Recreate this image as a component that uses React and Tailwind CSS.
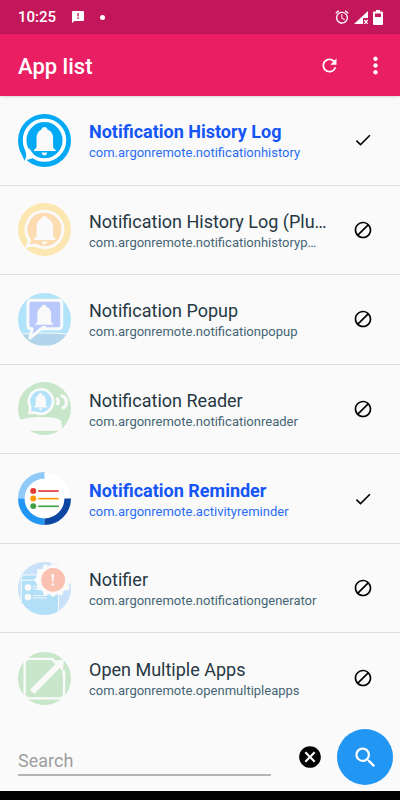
import { useState } from "react";
import {
  MdAlarm,
  MdBlock,
  MdCancel,
  MdCheck,
  MdMoreVert,
  MdRefresh,
  MdSearch,
} from "react-icons/md";

function IconFrame({ children }) {
  return (
    <svg viewBox="0 0 160 160" className="size-[53px] shrink-0" aria-hidden="true">
      {children}
    </svg>
  );
}

function Bell({ transform }) {
  return (
    <g fill="#fafafa" transform={transform}>
      <path d="M80 39c5 0 8 3 9 8 11 4 17 13 17 25v25c0 5 2 8 8 12v3H48v-3c5-4 8-7 8-12V72c0-12 6-21 15-25 1-5 4-8 9-8z" />
      <path d="M71 116h17c-1 6-4 9-8 9s-8-3-9-9z" />
    </g>
  );
}

function HistoryIcon({ outer, inner }) {
  return (
    <IconFrame>
      <circle cx="80" cy="80" r="80" fill={outer} />
      <path
        d="M80 25a55 55 0 1 1-28 102l-24 3 7-17A55 55 0 0 1 80 25z"
        fill={inner}
        stroke="#fafafa"
        strokeWidth="9"
      />
      <Bell />
    </IconFrame>
  );
}

function HistoryLogIcon() {
  return (
    <IconFrame>
      <circle cx="80" cy="80" r="80" fill="#03a9f4" />
      <circle cx="80" cy="79" r="60" fill="none" stroke="#fff" strokeWidth="11" />
      <path d="M22 108l12-4 18 24-10 6-22 6 5-13z" fill="#fff" />
      <path d="M4 106l16 9 5 11-5 16z" fill="#03a9f4" />
      <Bell />
    </IconFrame>
  );
}

function PopupIcon() {
  return (
    <IconFrame>
      <clipPath id="popup-clip">
        <circle cx="80" cy="80" r="80" />
      </clipPath>
      <g clipPath="url(#popup-clip)">
        <path fill="#b1e4fb" d="M0 0h160v160H0z" />
        <path
          d="M0 126c50-7 110-7 160 0v34H0z"
          fill="#b3d5eb"
          stroke="#fafafa"
          strokeWidth="3"
        />
      </g>
      <path
        d="M40 22h82c6 0 10 4 10 10v66c0 6-4 10-10 10H70l-34 28 7-28h-3c-6 0-10-4-10-10V32c0-6 4-10 10-10z"
        fill="#b9c9fc"
        stroke="#fafafa"
        strokeWidth="9"
        strokeLinejoin="round"
      />
      <Bell transform="translate(12 3) scale(.83)" />
    </IconFrame>
  );
}

function ReaderIcon() {
  return (
    <IconFrame>
      <circle cx="80" cy="80" r="80" fill="#c8e6c9" />
      <path
        d="M69 22a37 37 0 1 1-17 70l-17 1 2-17A37 37 0 0 1 69 22z"
        fill="#b3e3fb"
        stroke="#fafafa"
        strokeWidth="8"
      />
      <Bell transform="translate(20 10) scale(.6)" />
      <g fill="none" stroke="#fafafa" strokeWidth="10">
        <path d="M116 48c8 7 8 14 0 21" />
        <path d="M129 40c20 6 24 31 4 40" />
      </g>
      <path
        d="M4 116c20-13 98-13 118-4 8 4 10 9 10 18v17H8z"
        fill="#fafafa"
      />
    </IconFrame>
  );
}

function ReminderIcon() {
  return (
    <IconFrame>
      <circle cx="80" cy="80" r="78" fill="#fff" />
      <g fill="none" strokeWidth="20">
        <path d="M10 80A70 70 0 0 1 80 10" stroke="#90caf9" />
        <path d="M80 150A70 70 0 0 1 10 80" stroke="#2196f3" />
        <path d="M150 80A70 70 0 0 1 80 150" stroke="#0d47a1" />
      </g>
      <g fill="#e53935">
        <circle cx="46" cy="57" r="9" />
        <path d="M61 55h62v5H61z" />
      </g>
      <g fill="#ff9800">
        <circle cx="46" cy="80" r="9" />
        <path d="M61 78h62v5H61z" />
      </g>
      <g fill="#43a047">
        <circle cx="46" cy="103" r="9" />
        <path d="M61 101h62v5H61z" />
      </g>
    </IconFrame>
  );
}

function NotifierIcon() {
  return (
    <IconFrame>
      <clipPath id="notifier-clip">
        <circle cx="80" cy="80" r="80" />
      </clipPath>
      <g clipPath="url(#notifier-clip)">
        <path fill="#c9e2f9" d="M0 0h160v160H0z" />
        <path
          d="M10 170V54c0-10 5-15 15-15h82c10 0 15 5 15 15v116"
          fill="#b0dff7"
          stroke="#fafafa"
          strokeWidth="3"
        />
        <path d="M12 55h60" stroke="#fafafa" strokeWidth="3" />
        <g fill="#fafafa">
          <circle cx="30" cy="77" r="10" />
          <circle cx="30" cy="106" r="10" />
          <path d="M45 72h28v3H45zM45 79h30v3H45zM45 100h43v3H45zM45 107h43v3H45z" />
        </g>
      </g>
      <path
        d="M106 3l12 9 15-6 6 15 16 2-1 16 11 15-11 14 1 16-16 2-6 15-15-4-12 9-12-9-15 4-6-15-16-2 1-16-9-14 9-15-1-16 16-2 6-15 15 6z"
        fill="#fafafa"
      />
      <circle cx="106" cy="54" r="36" fill="#fac0b0" />
      <path d="M101 36h8l-2 24h-4z" fill="#fafafa" />
      <circle cx="105" cy="68" r="4" fill="#fafafa" />
    </IconFrame>
  );
}

function OpenMultipleIcon() {
  return (
    <IconFrame>
      <circle cx="80" cy="80" r="80" fill="#c8e6c9" />
      <path
        d="M107 21H33c-9 0-13 4-13 13v93c0 9 4 13 13 13h93c9 0 13-4 13-13V56"
        fill="none"
        stroke="#fafafa"
        strokeWidth="7"
      />
      <path
        d="M36 114l77-77-10-10 35-4-2 35-10-10-77 79z"
        fill="#fafafa"
      />
      <path d="M100 17l16 9-14 2zM144 64l-9-10-1 16z" fill="#fafafa" />
    </IconFrame>
  );
}

const apps = [
  {
    name: "Notification History Log",
    id: "com.argonremote.notificationhistory",
    icon: <HistoryLogIcon />,
    enabled: true,
  },
  {
    name: "Notification History Log (Plu…",
    id: "com.argonremote.notificationhistoryp…",
    icon: <HistoryIcon outer="#fde7b1" inner="#fcdcb0" />,
    enabled: false,
  },
  {
    name: "Notification Popup",
    id: "com.argonremote.notificationpopup",
    icon: <PopupIcon />,
    enabled: false,
  },
  {
    name: "Notification Reader",
    id: "com.argonremote.notificationreader",
    icon: <ReaderIcon />,
    enabled: false,
  },
  {
    name: "Notification Reminder",
    id: "com.argonremote.activityreminder",
    icon: <ReminderIcon />,
    enabled: true,
  },
  {
    name: "Notifier",
    id: "com.argonremote.notificationgenerator",
    icon: <NotifierIcon />,
    enabled: false,
  },
  {
    name: "Open Multiple Apps",
    id: "com.argonremote.openmultipleapps",
    icon: <OpenMultipleIcon />,
    enabled: false,
  },
];

function StatusBar() {
  return (
    <div className="flex h-[34px] items-center bg-[#c2185b] pr-[17px] pl-[18px] text-white">
      <span className="text-[15px] font-medium">10:25</span>
      <svg viewBox="0 0 12 12" className="ml-4 size-3" fill="currentColor">
        <path
          fillRule="evenodd"
          d="M1 0h10a1 1 0 0 1 1 1v8a1 1 0 0 1-1 1H2.500L0 12V1a1 1 0 0 1 1-1zM5.400 2v3.500h1.400V2zM5.400 6.500v1.400h1.400V6.500z"
        />
      </svg>
      <span className="ml-4 size-[5px] rounded-full bg-white" />
      <div className="ml-auto flex items-center gap-1">
        <MdAlarm className="size-4" />
        <svg viewBox="0 0 15 15" className="size-[15px]" fill="currentColor">
          <path d="M14 1v7H9v6H0z" />
          <path
            d="M10.300 10l3.400 3.800M13.700 10l-3.400 3.800"
            stroke="currentColor"
            strokeWidth="1.200"
          />
        </svg>
        <svg viewBox="0 0 10 15" className="h-[15px] w-[10px]" fill="currentColor">
          <path
            fillRule="evenodd"
            d="M3 0h4v1.500h2a1 1 0 0 1 1 1V14a1 1 0 0 1-1 1H1a1 1 0 0 1-1-1V2.500a1 1 0 0 1 1-1h2zM2 3.500V7h6V3.500z"
          />
        </svg>
      </div>
    </div>
  );
}

function AppRow({ app, onToggle }) {
  return (
    <li className="flex items-center border-b border-[#e0e0e0] pr-[27px] pl-[18px] last:border-b-0">
      {app.icon}
      <div className="ml-[18px] min-w-0 flex-1 pt-0.5">
        <h2
          className={
            app.enabled
              ? "truncate text-lg leading-6 font-bold text-[#1455f5]"
              : "truncate text-lg leading-6 text-[#263743]"
          }
        >
          {app.name}
        </h2>
        <p
          className={
            app.enabled
              ? "truncate text-[13px] leading-[18px] text-[#2a6df5]"
              : "truncate text-[13px] leading-[18px] text-[#456575]"
          }
        >
          {app.id}
        </p>
      </div>
      <button
        type="button"
        onClick={onToggle}
        aria-label={`Toggle ${app.name}`}
        className="ml-6 text-black"
      >
        {app.enabled ? (
          <MdCheck className="size-5" />
        ) : (
          <MdBlock className="size-5" />
        )}
      </button>
    </li>
  );
}

export default function App() {
  const [list, setList] = useState(apps);
  const [query, setQuery] = useState("");

  const toggle = (id) =>
    setList(list.map((a) => (a.id === id ? { ...a, enabled: !a.enabled } : a)));

  const visible = list.filter((a) =>
    a.name.toLowerCase().includes(query.toLowerCase())
  );

  return (
    <div className="flex min-h-screen flex-col bg-[#fafafa] font-['Roboto',sans-serif]">
      <StatusBar />

      <header className="flex h-[62px] items-center bg-[#e91e63] pr-[11px] pl-[18px] text-white shadow-sm">
        <h1 className="flex-1 pt-0.5 text-[22px] font-medium">App list</h1>
        <button type="button" aria-label="Refresh">
          <MdRefresh className="size-[21px]" />
        </button>
        <button type="button" aria-label="More options" className="ml-[22px]">
          <MdMoreVert className="size-[27px]" />
        </button>
      </header>

      <ul className="grid flex-1 auto-rows-fr grid-cols-1">
        {visible.map((app) => (
          <AppRow key={app.id} app={app} onToggle={() => toggle(app.id)} />
        ))}
      </ul>

      <form
        className="flex h-[68px] items-center pr-[7px] pl-[18px]"
        onSubmit={(e) => e.preventDefault()}
      >
        <input
          type="text"
          aria-label="Search"
          placeholder="Search"
          value={query}
          onChange={(e) => setQuery(e.target.value)}
          className="h-[38px] min-w-0 flex-1 border-b-2 border-[#b5b5b5] pt-2 text-lg text-[#263743] outline-none placeholder:text-[#9e9e9e]"
        />
        <button
          type="button"
          aria-label="Clear search"
          onClick={() => setQuery("")}
          className="ml-[26px] text-black"
        >
          <MdCancel className="size-[26px]" />
        </button>
        <button
          type="submit"
          aria-label="Run search"
          className="ml-[14px] flex size-14 items-center justify-center rounded-full bg-[#2196f3] text-white"
        >
          <MdSearch className="size-[27px]" />
        </button>
      </form>

      <div className="h-[9px] bg-black" />
    </div>
  );
}
